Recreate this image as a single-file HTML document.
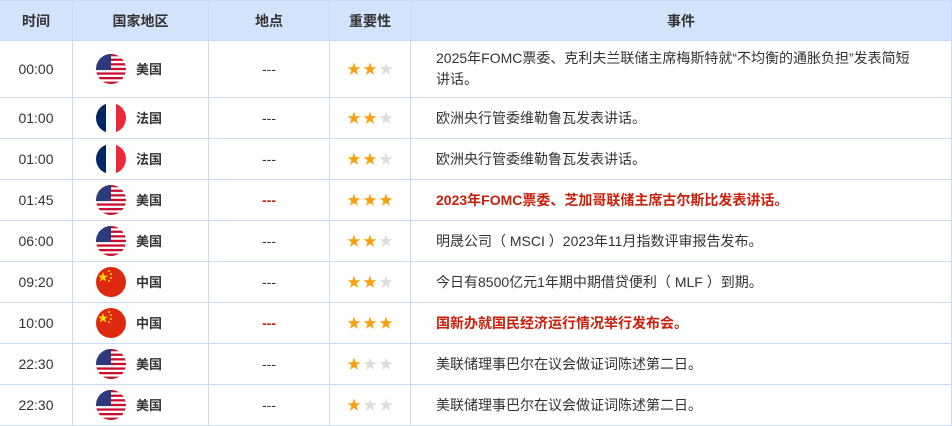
<!DOCTYPE html>
<html><head><meta charset="utf-8"><style>
body{margin:0;width:952px;height:425px;overflow:hidden;background:#fff;font-family:"Liberation Sans","Noto Sans CJK SC",sans-serif;font-size:14px;color:#333}
table{border-collapse:collapse;width:953px;table-layout:fixed;margin-left:-1px}
td,th{border:1px solid #cbdaf5;padding:0;text-align:center}
th{background:#d3e3fc;height:39px;font-weight:bold;font-size:14px;color:#333}
td{height:40px}
tr.r1 td{height:56px}
.c{display:flex;align-items:center;padding-left:23px;line-height:1}
.c svg{width:30px;height:30px;margin-right:10px;display:block}
.c b{font-weight:bold;font-size:13px}
.ev{text-align:left;padding-left:25px;line-height:21px;padding-right:28px}
.red{color:#c8200c;font-weight:bold}
.st{font-size:14px;letter-spacing:2px;color:#f7a00c;padding-left:2px}
.st i{font-style:normal;color:#ddd}
</style></head><body>
<svg width="0" height="0" style="position:absolute"><defs>
<clipPath id="cc"><circle cx="15" cy="15" r="15"/></clipPath>
<g id="us" clip-path="url(#cc)"><rect width="30" height="30" fill="#fff"/>
<rect y="0" width="30" height="2.3" fill="#c8102e"/><rect y="4.6" width="30" height="2.3" fill="#c8102e"/><rect y="9.2" width="30" height="2.3" fill="#c8102e"/><rect y="13.8" width="30" height="2.3" fill="#c8102e"/><rect y="18.4" width="30" height="2.3" fill="#c8102e"/><rect y="23" width="30" height="2.3" fill="#c8102e"/><rect y="27.6" width="30" height="2.4" fill="#c8102e"/>
<rect width="15" height="16" fill="#2b3a7c"/></g>
<g id="fr" clip-path="url(#cc)"><rect width="10" height="30" fill="#002664"/><rect x="10" width="10" height="30" fill="#fff"/><rect x="20" width="10" height="30" fill="#ed2939"/></g>
<g id="cn" clip-path="url(#cc)"><rect width="30" height="30" fill="#de2910"/><polygon points="7,5 8.2,8.6 12,8.6 9,10.8 10.1,14.4 7,12.2 3.9,14.4 5,10.8 2,8.6 5.8,8.6" fill="#ffde00"/><circle cx="13" cy="4" r="1" fill="#ffde00"/><circle cx="15" cy="7" r="1" fill="#ffde00"/><circle cx="15" cy="11" r="1" fill="#ffde00"/><circle cx="13" cy="14" r="1" fill="#ffde00"/></g>
</defs></svg>
<table>
<colgroup><col style="width:73px"><col style="width:136px"><col style="width:121px"><col style="width:81px"><col></colgroup>
<tr><th>时间</th><th>国家地区</th><th>地点</th><th>重要性</th><th>事件</th></tr>
<tr class="r1"><td>00:00</td><td><div class="c"><svg viewBox="0 0 30 30"><use href="#us"/></svg><b>美国</b></div></td><td>---</td><td class="st">★★<i>★</i></td><td class="ev">2025年FOMC票委、克利夫兰联储主席梅斯特就“不均衡的通胀负担”发表简短讲话。</td></tr>
<tr><td>01:00</td><td><div class="c"><svg viewBox="0 0 30 30"><use href="#fr"/></svg><b>法国</b></div></td><td>---</td><td class="st">★★<i>★</i></td><td class="ev">欧洲央行管委维勒鲁瓦发表讲话。</td></tr>
<tr><td>01:00</td><td><div class="c"><svg viewBox="0 0 30 30"><use href="#fr"/></svg><b>法国</b></div></td><td>---</td><td class="st">★★<i>★</i></td><td class="ev">欧洲央行管委维勒鲁瓦发表讲话。</td></tr>
<tr><td>01:45</td><td><div class="c"><svg viewBox="0 0 30 30"><use href="#us"/></svg><b>美国</b></div></td><td class="red">---</td><td class="st">★★★</td><td class="ev red">2023年FOMC票委、芝加哥联储主席古尔斯比发表讲话。</td></tr>
<tr><td>06:00</td><td><div class="c"><svg viewBox="0 0 30 30"><use href="#us"/></svg><b>美国</b></div></td><td>---</td><td class="st">★★<i>★</i></td><td class="ev">明晟公司（ MSCI ）2023年11月指数评审报告发布。</td></tr>
<tr><td>09:20</td><td><div class="c"><svg viewBox="0 0 30 30"><use href="#cn"/></svg><b>中国</b></div></td><td>---</td><td class="st">★★<i>★</i></td><td class="ev">今日有8500亿元1年期中期借贷便利（ MLF ）到期。</td></tr>
<tr><td>10:00</td><td><div class="c"><svg viewBox="0 0 30 30"><use href="#cn"/></svg><b>中国</b></div></td><td class="red">---</td><td class="st">★★★</td><td class="ev red">国新办就国民经济运行情况举行发布会。</td></tr>
<tr><td>22:30</td><td><div class="c"><svg viewBox="0 0 30 30"><use href="#us"/></svg><b>美国</b></div></td><td>---</td><td class="st">★<i>★★</i></td><td class="ev">美联储理事巴尔在议会做证词陈述第二日。</td></tr>
<tr><td>22:30</td><td><div class="c"><svg viewBox="0 0 30 30"><use href="#us"/></svg><b>美国</b></div></td><td>---</td><td class="st">★<i>★★</i></td><td class="ev">美联储理事巴尔在议会做证词陈述第二日。</td></tr>
</table>
</body></html>
